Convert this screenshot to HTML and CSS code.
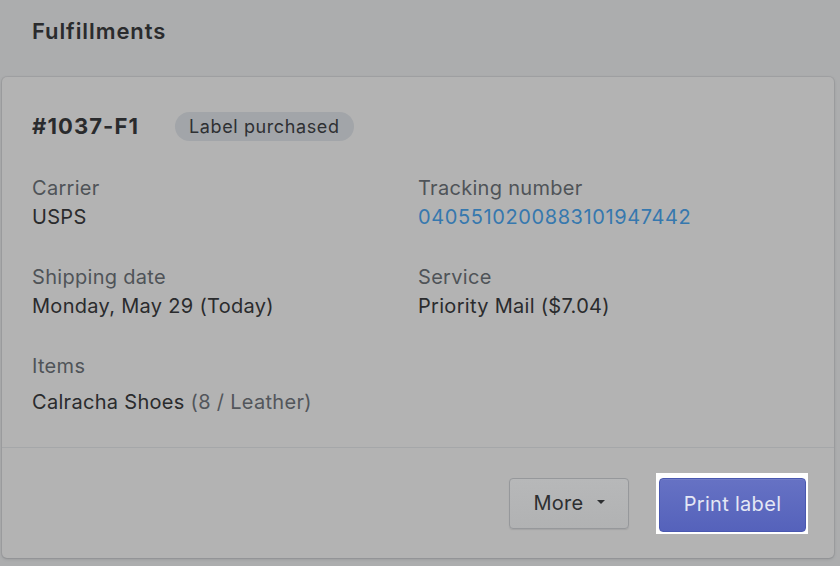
FILE: index.html
```html
<!DOCTYPE html>
<html lang="en">
<head>
<meta charset="utf-8">
<title>Fulfillments</title>
<link rel="stylesheet" href="styles.css">
</head>
<body>
  <main class="page">
    <h2 class="section-title">Fulfillments</h2>
    <section class="card">
      <div class="card-body">
        <div class="fulfillment-head">
          <h3 class="fulfillment-id">#1037-F1</h3>
          <span class="badge">Label purchased</span>
        </div>
        <dl class="details">
          <div class="field">
            <dt>Carrier</dt>
            <dd>USPS</dd>
          </div>
          <div class="field">
            <dt>Tracking number</dt>
            <dd><a class="link" href="#">0405510200883101947442</a></dd>
          </div>
          <div class="field">
            <dt>Shipping date</dt>
            <dd>Monday, May 29 (Today)</dd>
          </div>
          <div class="field">
            <dt>Service</dt>
            <dd>Priority Mail ($7.04)</dd>
          </div>
          <div class="field field-items">
            <dt>Items</dt>
            <dd>Calracha Shoes <span class="variant">(8 / Leather)</span></dd>
          </div>
        </dl>
      </div>
      <div class="card-footer">
        <button class="btn btn-secondary" type="button">More <span class="caret"></span></button>
        <span class="spotlight">
          <button class="btn btn-primary" type="button">Print label</button>
        </span>
      </div>
    </section>
  </main>
</body>
</html>
```
FILE: styles.css
```css
* {
  box-sizing: border-box;
}

html,
body {
  margin: 0;
  height: 100%;
}

body {
  background: #acadae;
  font-family: Inter, "Noto Sans", sans-serif;
  font-size: 20px;
  letter-spacing: 0.3px;
  color: #2a2b2d;
  overflow: hidden;
}

.page {
  display: flex;
  flex-direction: column;
}

.section-title {
  margin: 0;
  padding: 17px 32px 32px;
  font-size: 22px;
  line-height: 28px;
  font-weight: 600;
  letter-spacing: 0.9px;
  color: #2a2b2d;
}

.card {
  margin: 0 6px 0 2px;
  background: #b3b3b3;
  border-radius: 5px;
  box-shadow: 0 0 0 1px rgba(120, 122, 126, 0.18), 0 1px 3px rgba(90, 92, 96, 0.35);
}

.card-body {
  padding: 34px 30px 30px;
  border-bottom: 1px solid #a5a7a9;
}

.fulfillment-head {
  display: flex;
  align-items: center;
  gap: 36px;
  height: 30px;
}

.fulfillment-id {
  margin: 0;
  font-size: 22px;
  font-weight: 700;
  letter-spacing: 1.1px;
  line-height: 30px;
}

.badge {
  display: inline-flex;
  align-items: center;
  height: 29px;
  padding: 0 14px;
  border-radius: 15px;
  background: #a2a5a9;
  color: #2e3033;
  font-size: 18px;
  letter-spacing: 0.6px;
}

.details {
  display: grid;
  grid-template-columns: 386px 1fr;
  row-gap: 31px;
  margin: 33px 0 0;
}

.field dt {
  line-height: 29px;
  color: #4f5358;
}

.field dd {
  margin: 0;
  line-height: 29px;
}

.field-items dd {
  margin-top: 7px;
}

.link {
  color: #3678ae;
  letter-spacing: 0.6px;
  text-decoration: none;
}

.variant {
  color: #52565b;
}

.card-footer {
  display: flex;
  align-items: center;
  justify-content: flex-end;
  gap: 27px;
  height: 110px;
  padding-right: 26px;
}

.btn {
  font-family: inherit;
  font-size: 20px;
  letter-spacing: 0.3px;
  border-radius: 4px;
  cursor: pointer;
}

.btn-secondary {
  display: inline-flex;
  align-items: center;
  justify-content: center;
  gap: 13px;
  width: 120px;
  height: 51px;
  margin-top: 1px;
  padding-bottom: 2px;
  border: 1px solid #96989b;
  background: linear-gradient(#b7b8b9, #b1b2b3);
  color: #2d2f31;
  box-shadow: 0 1px 1px rgba(80, 82, 86, 0.15);
}

.caret {
  width: 0;
  height: 0;
  border-left: 4px solid transparent;
  border-right: 4px solid transparent;
  border-top: 4px solid #2d2f31;
  margin-top: -2px;
}

/* highlighted action sits on a white frame */
.spotlight {
  display: inline-flex;
  background: #ffffff;
  padding: 5px 2px 2px 3px;
}

.btn-primary {
  width: 147px;
  height: 54px;
  padding-bottom: 3px;
  border: 1px solid #4a58b0;
  background: linear-gradient(#6672c4, #5562bb);
  color: #e4e7f5;
  box-shadow: inset 0 1px 0 rgba(255, 255, 255, 0.08);
}
```
